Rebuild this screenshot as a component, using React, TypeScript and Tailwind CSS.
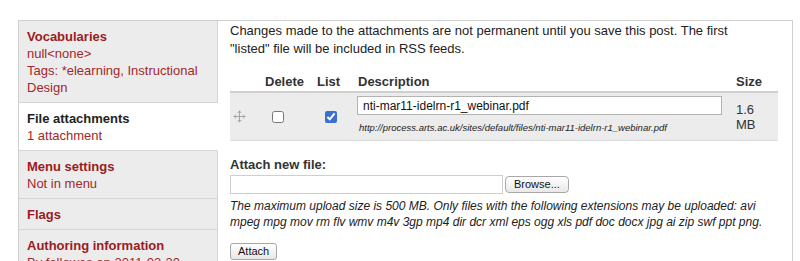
import { Move } from 'lucide-react';

const tabs = [
  { title: 'Vocabularies', lines: ['null<none>', 'Tags: *elearning, Instructional Design'], active: false },
  { title: 'File attachments', lines: ['1 attachment'], active: true },
  { title: 'Menu settings', lines: ['Not in menu'], active: false },
  { title: 'Flags', lines: [], active: false },
  { title: 'Authoring information', lines: ['By fellowes on 2011-03-30'], active: false },
];

export default function App() {
  return (
    <div className="h-[261px] w-[800px] overflow-hidden bg-white pl-[18px] pt-[20px] font-['Liberation_Sans',Arial,sans-serif] text-[13px] leading-[17px] text-[#222]">
      <div className="flex w-[775px] border-l border-r border-t border-[#cfcfcf]">
        {/* vertical tabs */}
        <ul className="w-[199px] shrink-0">
          {tabs.map((tab) => (
            <li
              key={tab.title}
              className={
                tab.active
                  ? 'border-b border-r border-[#d6d6d6] border-r-white bg-white px-[8px] pb-[6px] pt-[7px]'
                  : 'border-b border-r border-[#d6d6d6] bg-[#ececec] px-[8px] pb-[6px] pt-[7px]'
              }
            >
              <div className={tab.active ? 'font-bold text-[#222]' : 'font-bold text-[#9b1b1f]'}>{tab.title}</div>
              {tab.lines.map((l) => (
                <div key={l} className="text-[#a3282a]">
                  {l}
                </div>
              ))}
            </li>
          ))}
        </ul>

        {/* pane */}
        <div className="flex-1 pl-3 pr-[14px] pt-[1px]">
          <p className="w-[520px] leading-[18px] text-[#222]">
            Changes made to the attachments are not permanent until you save this post. The first "listed" file will be
            included in RSS feeds.
          </p>

          <table className="mt-[14px] w-full border-collapse">
            <thead>
              <tr className="border-b-2 border-[#cfcfcf] text-left font-bold text-[#333]">
                <th className="w-[34px] py-[1px]" />
                <th className="w-[53px] py-[1px] pl-[1px]">Delete</th>
                <th className="w-[40px] py-[1px]">List</th>
                <th className="py-[1px] pl-[1px]">Description</th>
                <th className="w-[50px] py-[1px] pl-[8px]">Size</th>
              </tr>
            </thead>
            <tbody>
              <tr className="border-b border-[#dcdcdc] bg-[#ececec]">
                <td className="pl-[3px] align-middle">
                  <Move className="h-[13px] w-[13px] text-[#9a9a9a]" strokeWidth={1.6} />
                </td>
                <td className="pl-[8px] align-middle">
                  <input type="checkbox" className="mt-[4px] h-[12px] w-[12px]" />
                </td>
                <td className="pl-[8px] align-middle">
                  <input type="checkbox" defaultChecked className="mt-[4px] h-[12px] w-[12px] accent-[#3a6fd1]" />
                </td>
                <td className="pb-[6px] pt-[3px] align-top">
                  <input
                    type="text"
                    defaultValue="nti-mar11-idelrn-r1_webinar.pdf"
                    className="h-[19px] w-[365px] border border-[#b3b3b3] bg-white px-[5px] text-[12px] text-[#111] outline-none"
                  />
                  <div className="mt-[6px] pl-[2px] text-[9.5px] italic leading-[13px] text-[#222]">
                    http://process.arts.ac.uk/sites/default/files/nti-mar11-idelrn-r1_webinar.pdf
                  </div>
                </td>
                <td className="pl-[8px] align-middle leading-[15px] text-[#333]">
                  1.6
                  <br />
                  MB
                </td>
              </tr>
            </tbody>
          </table>

          <div className="mt-[15px] font-bold text-[#333]">Attach new file:</div>
          <div className="mt-[2px] flex items-center gap-[2px]">
            <input type="text" className="h-[19px] w-[273px] border border-[#cfcfcf] bg-white outline-none" />
            <button className="h-[17px] rounded-[4px] border border-[#a8a8a8] bg-gradient-to-b from-white to-[#e8e8e8] px-[8px] text-[11px] leading-[15px] text-[#111]">
              Browse...
            </button>
          </div>
          <p className="mt-[4px] text-[12px] italic leading-[16px] text-[#222]">
            The maximum upload size is 500 MB. Only files with the following extensions may be uploaded: avi mpeg mpg mov
            rm flv wmv m4v 3gp mp4 dir dcr xml eps ogg xls pdf doc docx jpg ai zip swf ppt png.
          </p>
          <button className="mt-[13px] h-[17px] rounded-[3px] border border-[#a8a8a8] bg-gradient-to-b from-white to-[#e8e8e8] px-[7px] text-[11px] leading-[15px] text-[#111]">
            Attach
          </button>
        </div>
      </div>
    </div>
  );
}
